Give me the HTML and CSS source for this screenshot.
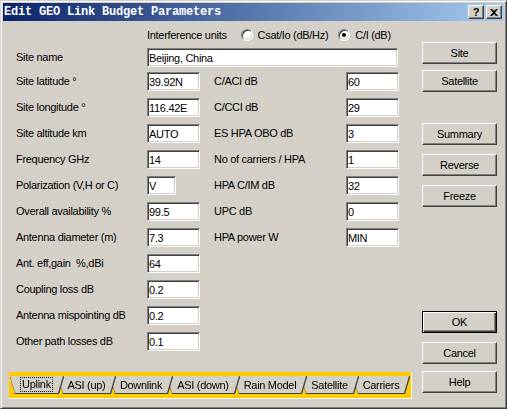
FILE: index.html
```html
<!DOCTYPE html>
<html lang="en">
<head>
    <meta charset="UTF-8">
    <title>Edit GEO Link Budget Parameters</title>
    <link rel="stylesheet" href="styles.css">
</head>
<body>

    <div class="window">
        <div class="titlebar">
            <span class="title">Edit GEO Link Budget Parameters</span>
            <div class="caption-buttons">
                <span class="caption-btn help">?</span>
                <span class="caption-btn">
                    <svg width="8" height="7" viewBox="0 0 8 7"><path d="M0 0h2l2 2 2-2h2L5 3.5 8 7H6L4 5 2 7H0l3-3.5z" fill="#000"/></svg>
                </span>
            </div>
        </div>

        <div class="client">
            <div class="main">
                <!-- interference units -->
                <div class="units-row">
                    <span class="units-label">Interference units</span>
                    <span class="radio"></span>
                    <span class="radio-text">Csat/Io (dB/Hz)</span>
                    <span class="radio checked"></span>
                    <span class="radio-text">C/I (dB)</span>
                </div>

                <!-- parameters -->
                <div class="form-grid">
                    <label>Site name</label>
                    <input class="field wide" type="text" value="Beijing, China">

                    <label>Site latitude °</label>
                    <input class="field" type="text" value="39.92N">
                    <label>C/ACI dB</label>
                    <input class="field" type="text" value="60">

                    <label>Site longitude °</label>
                    <input class="field" type="text" value="116.42E">
                    <label>C/CCI dB</label>
                    <input class="field" type="text" value="29">

                    <label>Site altitude km</label>
                    <input class="field" type="text" value="AUTO">
                    <label>ES HPA OBO dB</label>
                    <input class="field" type="text" value="3">

                    <label>Frequency GHz</label>
                    <input class="field" type="text" value="14">
                    <label>No of carriers / HPA</label>
                    <input class="field" type="text" value="1">

                    <label>Polarization (V,H or C)</label>
                    <input class="field small" type="text" value="V">
                    <label>HPA C/IM dB</label>
                    <input class="field" type="text" value="32">

                    <label>Overall availability %</label>
                    <input class="field" type="text" value="99.5">
                    <label>UPC dB</label>
                    <input class="field" type="text" value="0">

                    <label>Antenna diameter (m)</label>
                    <input class="field" type="text" value="7.3">
                    <label>HPA power W</label>
                    <input class="field" type="text" value="MIN">

                    <label class="full">Ant. eff,gain&nbsp; %,dBi</label>
                    <input class="field" type="text" value="64">

                    <label class="full">Coupling loss dB</label>
                    <input class="field" type="text" value="0.2">

                    <label class="full">Antenna mispointing dB</label>
                    <input class="field" type="text" value="0.2">

                    <label class="full">Other path losses dB</label>
                    <input class="field" type="text" value="0.1">
                </div>

                <!-- tabs -->
                <div class="tabset">
                    <div class="tab t1 selected"><span class="tab-face"><span class="focus">Uplink</span></span></div>
                    <div class="tab t2"><span class="tab-face">ASI (up)</span></div>
                    <div class="tab t3"><span class="tab-face">Downlink</span></div>
                    <div class="tab t4"><span class="tab-face">ASI (down)</span></div>
                    <div class="tab t5"><span class="tab-face">Rain Model</span></div>
                    <div class="tab t6"><span class="tab-face">Satellite</span></div>
                    <div class="tab t7"><span class="tab-face">Carriers</span></div>
                </div>
            </div>

            <div class="side">
                <button class="btn btn-site">Site</button>
                <button class="btn btn-sat">Satellite</button>
                <button class="btn btn-summary">Summary</button>
                <button class="btn btn-gap">Reverse</button>
                <button class="btn btn-gap">Freeze</button>
                <button class="btn btn-ok">OK</button>
                <button class="btn btn-gap">Cancel</button>
                <button class="btn btn-help">Help</button>
            </div>
        </div>
    </div>

</body>
</html>
```

FILE: styles.css
```css
body {
    margin: 0;
    background-color: #d4d0c8;
    font-family: "Liberation Sans", Arial, sans-serif;
    font-size: 11px;
    letter-spacing: -0.3px;
    color: #000;
}

.window {
    width: 507px;
    height: 409px;
    box-sizing: border-box;
    background-color: #d4d0c8;
    border: 1px solid;
    border-color: #d4d0c8 #404040 #404040 #d4d0c8;
    box-shadow: inset 1px 1px #fff, inset -1px -1px #808080;
    padding: 2px;
    display: flex;
    flex-direction: column;
}

/* title bar */
.titlebar {
    height: 18px;
    display: flex;
    align-items: center;
    justify-content: space-between;
    background: linear-gradient(to right, #0a246a, #a6caf0);
    padding: 0 2px 0 1px;
}

.title {
    color: #fff;
    font-family: "Liberation Mono", monospace;
    font-weight: bold;
    font-size: 12px;
    letter-spacing: -0.2px;
}

.caption-buttons {
    display: flex;
    gap: 2px;
}

.caption-btn {
    width: 16px;
    height: 14px;
    box-sizing: border-box;
    background-color: #d4d0c8;
    border: 1px solid;
    border-color: #fff #404040 #404040 #fff;
    box-shadow: inset -1px -1px #808080;
    display: flex;
    align-items: center;
    justify-content: center;
}

.caption-btn.help {
    font-weight: bold;
    font-size: 11px;
    line-height: 12px;
    letter-spacing: 0;
}

/* client area */
.client {
    flex: 1;
    display: flex;
}

.main {
    flex: 1;
}

.units-row {
    display: flex;
    align-items: center;
    height: 18px;
    margin: 5px 0 4px 144px;
    white-space: nowrap;
}

.units-label {
    margin-right: 14px;
}

.radio {
    flex: none;
    width: 12px;
    height: 12px;
    box-sizing: border-box;
    border-radius: 50%;
    background-color: #fff;
    border: 1px solid;
    border-color: #808080 #fff #fff #808080;
    box-shadow: inset 1px 1px #404040, inset -1px -1px #d4d0c8;
    display: flex;
    align-items: center;
    justify-content: center;
}

.radio.checked::after {
    content: "";
    width: 4px;
    height: 4px;
    border-radius: 50%;
    background-color: #000;
}

.radio-text {
    margin: 0 10px 0 5px;
}

.form-grid {
    display: grid;
    grid-template-columns: 131px 67px 132px 52px;
    grid-template-rows: 24px repeat(10, 26px) 19px;
    align-items: start;
    margin-left: 13px;
}

.form-grid label {
    line-height: 19px;
    white-space: nowrap;
}

.form-grid label.full {
    grid-column: 1;
}

.field {
    width: 53px;
    height: 19px;
    box-sizing: border-box;
    margin: 0;
    padding: 0 1px;
    font-family: inherit;
    font-size: 11px;
    letter-spacing: -0.3px;
    color: #000;
    background-color: #fff;
    border: 1px solid;
    border-color: #808080 #fff #fff #808080;
    box-shadow: inset 1px 1px #404040, inset -1px -1px #d4d0c8;
    outline: none;
}

.field.wide {
    grid-column: 2 / 5;
    width: 251px;
}

.field.small {
    width: 29px;
}

/* tab set */
.tabset {
    margin: 21px 0 0 6px;
    width: 401px;
    background-color: #ffcc00;
    border-right: 1px solid #fff;
    border-bottom: 1px solid #fff;
    padding: 4px 0 5px 1px;
    display: flex;
}

.tab {
    position: relative;
    margin-right: -5px;
    filter: drop-shadow(1px 0 0 #404040) drop-shadow(0 1px 0 #404040);
}

.tab-face {
    display: flex;
    align-items: center;
    justify-content: center;
    height: 17px;
    background-color: #d4d0c8;
    clip-path: polygon(0 0, 100% 0, calc(100% - 5px) 100%, 5px 100%);
}

.t1 { z-index: 7; }
.t2 { z-index: 6; }
.t3 { z-index: 5; }
.t4 { z-index: 4; }
.t5 { z-index: 3; }
.t6 { z-index: 2; }
.t7 { z-index: 1; }

.t1 .tab-face { width: 53px; }
.t2 .tab-face { width: 57px; }
.t3 .tab-face { width: 62px; }
.t4 .tab-face { width: 72px; }
.t5 .tab-face { width: 72px; }
.t6 .tab-face { width: 57px; }
.t7 .tab-face { width: 56px; }

.focus {
    outline: 1px dotted #000;
    padding: 0 1px;
    line-height: 13px;
}

/* side buttons */
.side {
    width: 75px;
    margin-right: 7px;
    padding-top: 21px;
    display: flex;
    flex-direction: column;
}

.btn {
    height: 22px;
    padding: 0;
    font-family: inherit;
    font-size: 11px;
    letter-spacing: -0.3px;
    color: #000;
    background-color: #d4d0c8;
    border: 1px solid;
    border-color: #fff #404040 #404040 #fff;
    box-shadow: inset -1px -1px #808080;
}

.btn-sat {
    margin-top: 6px;
}

.btn-summary {
    margin-top: 31px;
}

.btn-gap {
    margin-top: 9px;
}

.btn-ok {
    margin-top: 104px;
    border-color: #000;
    box-shadow: inset 1px 1px #fff, inset -1px -1px #404040, inset -2px -2px #808080;
}

.btn-help {
    margin-top: 7px;
}
```
